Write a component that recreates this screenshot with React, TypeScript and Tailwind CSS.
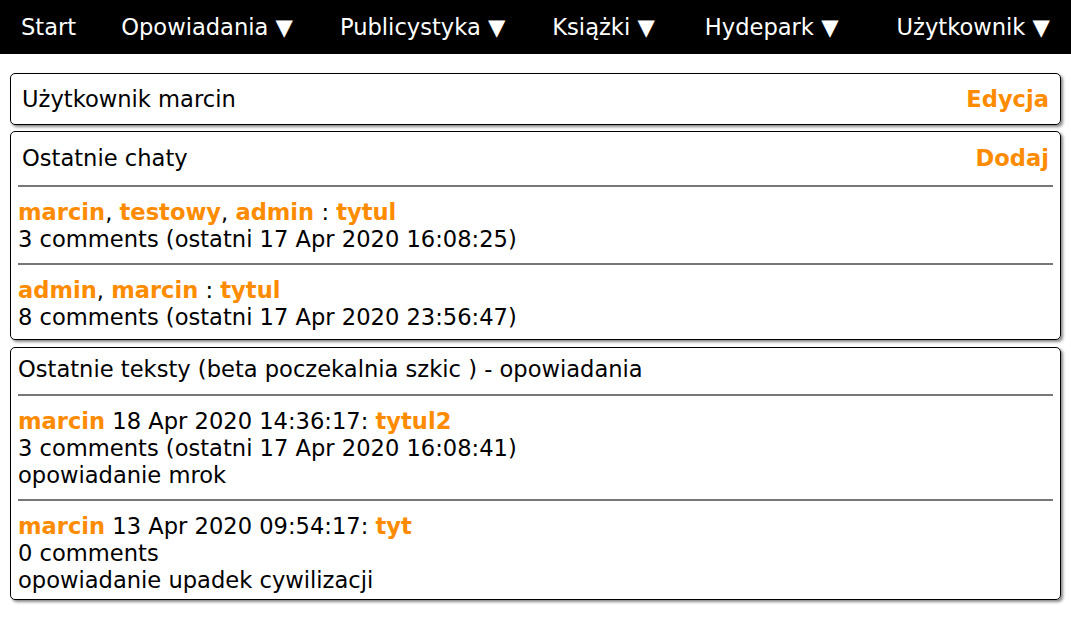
import React from "react";

const O = ({ children }: { children: React.ReactNode }) => (
  <span className="font-bold text-[#ff8c00]">{children}</span>
);

const Hr = () => <div className="mt-[10px] mb-[12px] border-t-2 border-[#777]" />;

export default function App() {
  return (
    <div className="min-h-[619px] bg-white text-black text-[22.6px] leading-[27px]" style={{ fontFamily: '"DejaVu Sans", Verdana, sans-serif' }}>
      <div className="flex h-[54px] items-center bg-black px-[21px] text-white">
        <span>Start</span>
        <span className="ml-[45px]">Opowiadania ▼</span>
        <span className="ml-[47px]">Publicystyka ▼</span>
        <span className="ml-[47px]">Książki ▼</span>
        <span className="ml-[50px]">Hydepark ▼</span>
        <span className="ml-auto">Użytkownik ▼</span>
      </div>
      <div className="flex flex-col gap-[6px] px-[10px] pt-[19px]">
        <div className="rounded-[5px] border border-black px-[7px] pt-[8px] pb-[7px] shadow-[2px_2px_3px_#888]">
          <div className="flex justify-between px-[4px] py-[4px]">
            <span>Użytkownik marcin</span>
            <O>Edycja</O>
          </div>
        </div>
        <div className="rounded-[5px] border border-black px-[7px] pt-[9px] pb-[8px] shadow-[2px_2px_3px_#888]">
          <div className="flex justify-between px-[4px] pt-[4px] pb-[3px]">
            <span>Ostatnie chaty</span>
            <O>Dodaj</O>
          </div>
          <Hr />
          <div>
            <O>marcin</O>, <O>testowy</O>, <O>admin</O> : <O>tytul</O>
          </div>
          <div>3 comments (ostatni 17 Apr 2020 16:08:25)</div>
          <Hr />
          <div>
            <O>admin</O>, <O>marcin</O> : <O>tytul</O>
          </div>
          <div>8 comments (ostatni 17 Apr 2020 23:56:47)</div>
        </div>
        <div className="mt-[1px] rounded-[5px] border border-black px-[7px] pt-[8px] pb-[5px] shadow-[2px_2px_3px_#888]">
          <div className="pb-[1px]">Ostatnie teksty (beta poczekalnia szkic ) - opowiadania</div>
          <Hr />
          <div>
            <O>marcin</O> 18 Apr 2020 14:36:17: <O>tytul2</O>
          </div>
          <div>3 comments (ostatni 17 Apr 2020 16:08:41)</div>
          <div>opowiadanie mrok</div>
          <Hr />
          <div>
            <O>marcin</O> 13 Apr 2020 09:54:17: <O>tyt</O>
          </div>
          <div>0 comments</div>
          <div>opowiadanie upadek cywilizacji</div>
        </div>
      </div>
    </div>
  );
}
